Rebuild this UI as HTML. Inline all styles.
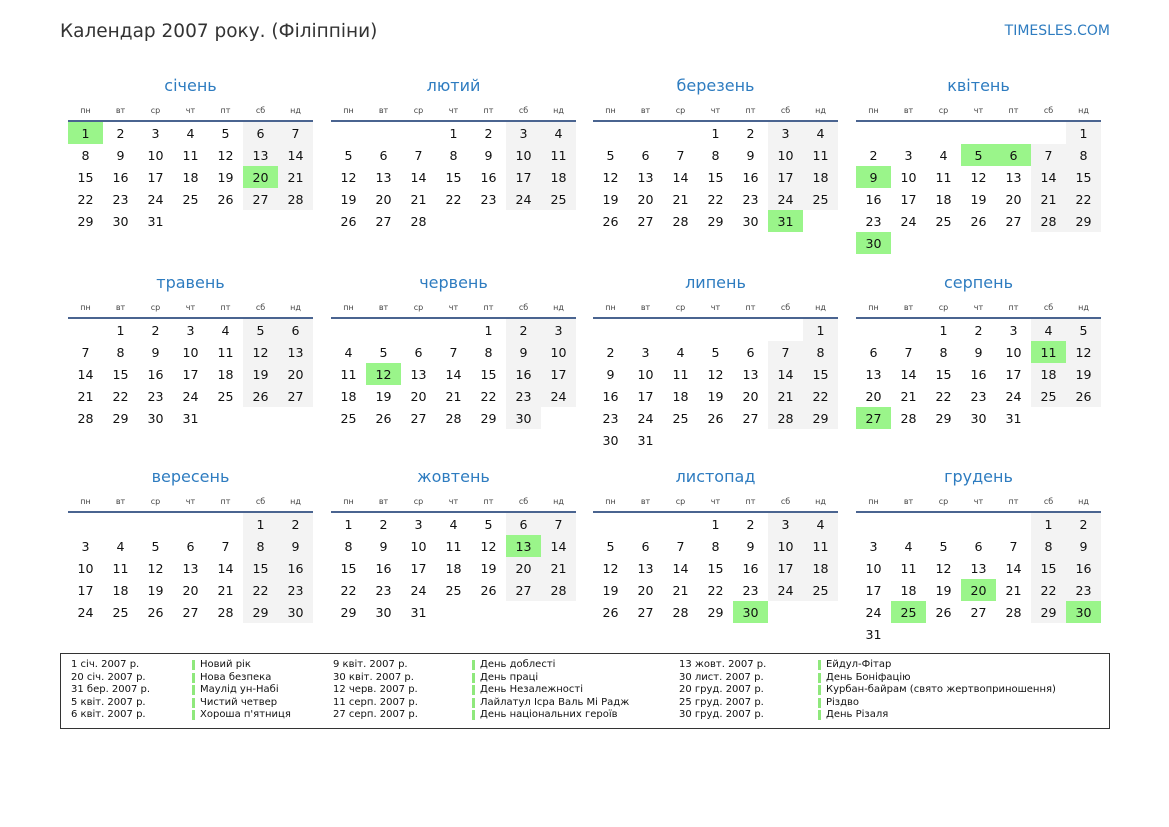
<!DOCTYPE html>
<html><head><meta charset="utf-8"><style>
body{margin:0;width:1169px;height:827px;background:#fff;position:relative;font-family:"DejaVu Sans","Liberation Sans",sans-serif;color:#111;overflow:hidden}
.hd{position:absolute;left:60px;top:21px;font-size:18.5px;color:#333}
.brand{position:absolute;right:59px;top:23px;font-size:14px;color:#2e7cc0}
.m{position:absolute;width:245px}
.t{height:26px;line-height:26px;text-align:center;font-size:16px;color:#2e7cc0}
.d{height:19px;margin-top:2px;display:flex;font-size:8px;color:#444}
.d span{width:35px;text-align:center;line-height:19px}
.ln{height:2px;background:#4a6490}
table{border-collapse:collapse;border-spacing:0}
td{width:35px;height:22px;padding:0;text-align:center;font-size:12.6px}
td.w{background:#f3f3f3}
td.h{background:#9af58a}
.lg{position:absolute;left:60px;top:653px;width:1048px;height:74px;border:1.3px solid #333;font-size:10px;color:#111}
.c{position:absolute;top:5px;line-height:12.6px}
.b{padding-top:1px}
.b div{border-left:3px solid #8fe87c;padding-left:5px;margin:0 0 2.6px;line-height:10px;height:10px}
</style></head><body>
<div class="hd">Календар 2007 року. (Філіппіни)</div>
<div class="brand">TIMESLES.COM</div>

<div class="m" style="left:68px;top:73px"><div class="t">січень</div><div class="d"><span>пн</span><span>вт</span><span>ср</span><span>чт</span><span>пт</span><span>сб</span><span>нд</span></div><div class="ln"></div><table>
<tr><td class="h">1</td><td>2</td><td>3</td><td>4</td><td>5</td><td class="w">6</td><td class="w">7</td></tr>
<tr><td>8</td><td>9</td><td>10</td><td>11</td><td>12</td><td class="w">13</td><td class="w">14</td></tr>
<tr><td>15</td><td>16</td><td>17</td><td>18</td><td>19</td><td class="h">20</td><td class="w">21</td></tr>
<tr><td>22</td><td>23</td><td>24</td><td>25</td><td>26</td><td class="w">27</td><td class="w">28</td></tr>
<tr><td>29</td><td>30</td><td>31</td><td></td><td></td><td></td><td></td></tr>
</table></div>

<div class="m" style="left:331px;top:73px"><div class="t">лютий</div><div class="d"><span>пн</span><span>вт</span><span>ср</span><span>чт</span><span>пт</span><span>сб</span><span>нд</span></div><div class="ln"></div><table>
<tr><td></td><td></td><td></td><td>1</td><td>2</td><td class="w">3</td><td class="w">4</td></tr>
<tr><td>5</td><td>6</td><td>7</td><td>8</td><td>9</td><td class="w">10</td><td class="w">11</td></tr>
<tr><td>12</td><td>13</td><td>14</td><td>15</td><td>16</td><td class="w">17</td><td class="w">18</td></tr>
<tr><td>19</td><td>20</td><td>21</td><td>22</td><td>23</td><td class="w">24</td><td class="w">25</td></tr>
<tr><td>26</td><td>27</td><td>28</td><td></td><td></td><td></td><td></td></tr>
</table></div>

<div class="m" style="left:593px;top:73px"><div class="t">березень</div><div class="d"><span>пн</span><span>вт</span><span>ср</span><span>чт</span><span>пт</span><span>сб</span><span>нд</span></div><div class="ln"></div><table>
<tr><td></td><td></td><td></td><td>1</td><td>2</td><td class="w">3</td><td class="w">4</td></tr>
<tr><td>5</td><td>6</td><td>7</td><td>8</td><td>9</td><td class="w">10</td><td class="w">11</td></tr>
<tr><td>12</td><td>13</td><td>14</td><td>15</td><td>16</td><td class="w">17</td><td class="w">18</td></tr>
<tr><td>19</td><td>20</td><td>21</td><td>22</td><td>23</td><td class="w">24</td><td class="w">25</td></tr>
<tr><td>26</td><td>27</td><td>28</td><td>29</td><td>30</td><td class="h">31</td><td></td></tr>
</table></div>

<div class="m" style="left:856px;top:73px"><div class="t">квітень</div><div class="d"><span>пн</span><span>вт</span><span>ср</span><span>чт</span><span>пт</span><span>сб</span><span>нд</span></div><div class="ln"></div><table>
<tr><td></td><td></td><td></td><td></td><td></td><td></td><td class="w">1</td></tr>
<tr><td>2</td><td>3</td><td>4</td><td class="h">5</td><td class="h">6</td><td class="w">7</td><td class="w">8</td></tr>
<tr><td class="h">9</td><td>10</td><td>11</td><td>12</td><td>13</td><td class="w">14</td><td class="w">15</td></tr>
<tr><td>16</td><td>17</td><td>18</td><td>19</td><td>20</td><td class="w">21</td><td class="w">22</td></tr>
<tr><td>23</td><td>24</td><td>25</td><td>26</td><td>27</td><td class="w">28</td><td class="w">29</td></tr>
<tr><td class="h">30</td><td></td><td></td><td></td><td></td><td></td><td></td></tr>
</table></div>

<div class="m" style="left:68px;top:270px"><div class="t">травень</div><div class="d"><span>пн</span><span>вт</span><span>ср</span><span>чт</span><span>пт</span><span>сб</span><span>нд</span></div><div class="ln"></div><table>
<tr><td></td><td>1</td><td>2</td><td>3</td><td>4</td><td class="w">5</td><td class="w">6</td></tr>
<tr><td>7</td><td>8</td><td>9</td><td>10</td><td>11</td><td class="w">12</td><td class="w">13</td></tr>
<tr><td>14</td><td>15</td><td>16</td><td>17</td><td>18</td><td class="w">19</td><td class="w">20</td></tr>
<tr><td>21</td><td>22</td><td>23</td><td>24</td><td>25</td><td class="w">26</td><td class="w">27</td></tr>
<tr><td>28</td><td>29</td><td>30</td><td>31</td><td></td><td></td><td></td></tr>
</table></div>

<div class="m" style="left:331px;top:270px"><div class="t">червень</div><div class="d"><span>пн</span><span>вт</span><span>ср</span><span>чт</span><span>пт</span><span>сб</span><span>нд</span></div><div class="ln"></div><table>
<tr><td></td><td></td><td></td><td></td><td>1</td><td class="w">2</td><td class="w">3</td></tr>
<tr><td>4</td><td>5</td><td>6</td><td>7</td><td>8</td><td class="w">9</td><td class="w">10</td></tr>
<tr><td>11</td><td class="h">12</td><td>13</td><td>14</td><td>15</td><td class="w">16</td><td class="w">17</td></tr>
<tr><td>18</td><td>19</td><td>20</td><td>21</td><td>22</td><td class="w">23</td><td class="w">24</td></tr>
<tr><td>25</td><td>26</td><td>27</td><td>28</td><td>29</td><td class="w">30</td><td></td></tr>
</table></div>

<div class="m" style="left:593px;top:270px"><div class="t">липень</div><div class="d"><span>пн</span><span>вт</span><span>ср</span><span>чт</span><span>пт</span><span>сб</span><span>нд</span></div><div class="ln"></div><table>
<tr><td></td><td></td><td></td><td></td><td></td><td></td><td class="w">1</td></tr>
<tr><td>2</td><td>3</td><td>4</td><td>5</td><td>6</td><td class="w">7</td><td class="w">8</td></tr>
<tr><td>9</td><td>10</td><td>11</td><td>12</td><td>13</td><td class="w">14</td><td class="w">15</td></tr>
<tr><td>16</td><td>17</td><td>18</td><td>19</td><td>20</td><td class="w">21</td><td class="w">22</td></tr>
<tr><td>23</td><td>24</td><td>25</td><td>26</td><td>27</td><td class="w">28</td><td class="w">29</td></tr>
<tr><td>30</td><td>31</td><td></td><td></td><td></td><td></td><td></td></tr>
</table></div>

<div class="m" style="left:856px;top:270px"><div class="t">серпень</div><div class="d"><span>пн</span><span>вт</span><span>ср</span><span>чт</span><span>пт</span><span>сб</span><span>нд</span></div><div class="ln"></div><table>
<tr><td></td><td></td><td>1</td><td>2</td><td>3</td><td class="w">4</td><td class="w">5</td></tr>
<tr><td>6</td><td>7</td><td>8</td><td>9</td><td>10</td><td class="h">11</td><td class="w">12</td></tr>
<tr><td>13</td><td>14</td><td>15</td><td>16</td><td>17</td><td class="w">18</td><td class="w">19</td></tr>
<tr><td>20</td><td>21</td><td>22</td><td>23</td><td>24</td><td class="w">25</td><td class="w">26</td></tr>
<tr><td class="h">27</td><td>28</td><td>29</td><td>30</td><td>31</td><td></td><td></td></tr>
</table></div>

<div class="m" style="left:68px;top:464px"><div class="t">вересень</div><div class="d"><span>пн</span><span>вт</span><span>ср</span><span>чт</span><span>пт</span><span>сб</span><span>нд</span></div><div class="ln"></div><table>
<tr><td></td><td></td><td></td><td></td><td></td><td class="w">1</td><td class="w">2</td></tr>
<tr><td>3</td><td>4</td><td>5</td><td>6</td><td>7</td><td class="w">8</td><td class="w">9</td></tr>
<tr><td>10</td><td>11</td><td>12</td><td>13</td><td>14</td><td class="w">15</td><td class="w">16</td></tr>
<tr><td>17</td><td>18</td><td>19</td><td>20</td><td>21</td><td class="w">22</td><td class="w">23</td></tr>
<tr><td>24</td><td>25</td><td>26</td><td>27</td><td>28</td><td class="w">29</td><td class="w">30</td></tr>
</table></div>

<div class="m" style="left:331px;top:464px"><div class="t">жовтень</div><div class="d"><span>пн</span><span>вт</span><span>ср</span><span>чт</span><span>пт</span><span>сб</span><span>нд</span></div><div class="ln"></div><table>
<tr><td>1</td><td>2</td><td>3</td><td>4</td><td>5</td><td class="w">6</td><td class="w">7</td></tr>
<tr><td>8</td><td>9</td><td>10</td><td>11</td><td>12</td><td class="h">13</td><td class="w">14</td></tr>
<tr><td>15</td><td>16</td><td>17</td><td>18</td><td>19</td><td class="w">20</td><td class="w">21</td></tr>
<tr><td>22</td><td>23</td><td>24</td><td>25</td><td>26</td><td class="w">27</td><td class="w">28</td></tr>
<tr><td>29</td><td>30</td><td>31</td><td></td><td></td><td></td><td></td></tr>
</table></div>

<div class="m" style="left:593px;top:464px"><div class="t">листопад</div><div class="d"><span>пн</span><span>вт</span><span>ср</span><span>чт</span><span>пт</span><span>сб</span><span>нд</span></div><div class="ln"></div><table>
<tr><td></td><td></td><td></td><td>1</td><td>2</td><td class="w">3</td><td class="w">4</td></tr>
<tr><td>5</td><td>6</td><td>7</td><td>8</td><td>9</td><td class="w">10</td><td class="w">11</td></tr>
<tr><td>12</td><td>13</td><td>14</td><td>15</td><td>16</td><td class="w">17</td><td class="w">18</td></tr>
<tr><td>19</td><td>20</td><td>21</td><td>22</td><td>23</td><td class="w">24</td><td class="w">25</td></tr>
<tr><td>26</td><td>27</td><td>28</td><td>29</td><td class="h">30</td><td></td><td></td></tr>
</table></div>

<div class="m" style="left:856px;top:464px"><div class="t">грудень</div><div class="d"><span>пн</span><span>вт</span><span>ср</span><span>чт</span><span>пт</span><span>сб</span><span>нд</span></div><div class="ln"></div><table>
<tr><td></td><td></td><td></td><td></td><td></td><td class="w">1</td><td class="w">2</td></tr>
<tr><td>3</td><td>4</td><td>5</td><td>6</td><td>7</td><td class="w">8</td><td class="w">9</td></tr>
<tr><td>10</td><td>11</td><td>12</td><td>13</td><td>14</td><td class="w">15</td><td class="w">16</td></tr>
<tr><td>17</td><td>18</td><td>19</td><td class="h">20</td><td>21</td><td class="w">22</td><td class="w">23</td></tr>
<tr><td>24</td><td class="h">25</td><td>26</td><td>27</td><td>28</td><td class="w">29</td><td class="h">30</td></tr>
<tr><td>31</td><td></td><td></td><td></td><td></td><td></td><td></td></tr>
</table></div>

<div class="lg">
<div class="c" style="left:10px">1 січ. 2007 р.<br>20 січ. 2007 р.<br>31 бер. 2007 р.<br>5 квіт. 2007 р.<br>6 квіт. 2007 р.</div>
<div class="c b" style="left:131px"><div>Новий рік</div><div>Нова безпека</div><div>Маулід ун-Набі</div><div>Чистий четвер</div><div>Хороша п'ятниця</div></div>
<div class="c" style="left:272px">9 квіт. 2007 р.<br>30 квіт. 2007 р.<br>12 черв. 2007 р.<br>11 серп. 2007 р.<br>27 серп. 2007 р.</div>
<div class="c b" style="left:411px"><div>День доблесті</div><div>День праці</div><div>День Незалежності</div><div>Лайлатул Ісра Валь Мі Радж</div><div>День національних героїв</div></div>
<div class="c" style="left:618px">13 жовт. 2007 р.<br>30 лист. 2007 р.<br>20 груд. 2007 р.<br>25 груд. 2007 р.<br>30 груд. 2007 р.</div>
<div class="c b" style="left:757px"><div>Ейдул-Фітар</div><div>День Боніфацію</div><div>Курбан-байрам (свято жертвоприношення)</div><div>Різдво</div><div>День Різаля</div></div>
</div>
</body></html>
